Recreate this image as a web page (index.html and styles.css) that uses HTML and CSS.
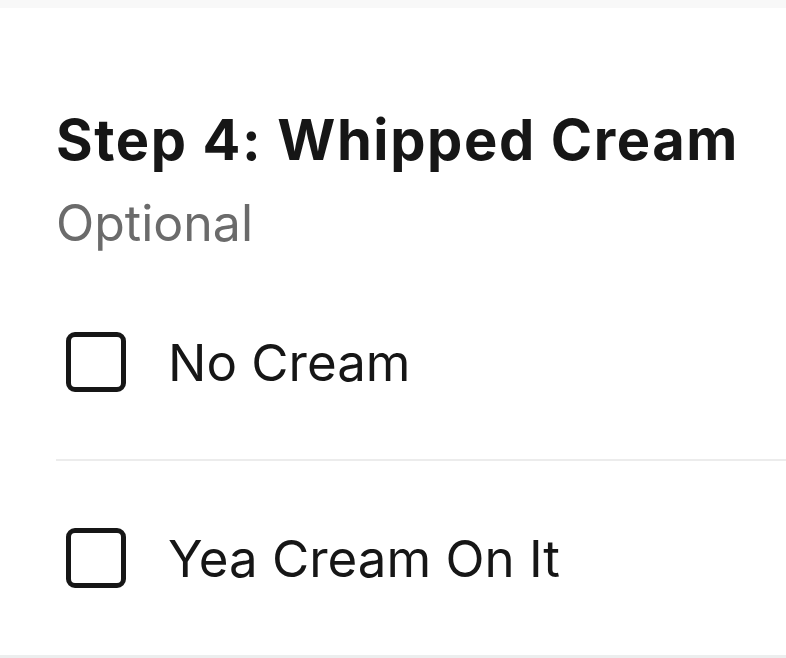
FILE: index.html
```html
<!DOCTYPE html>
<html lang="en">
<head>
  <meta charset="UTF-8">
  <meta name="viewport" content="width=device-width, initial-scale=1.0">
  <title>Step 4: Whipped Cream</title>
  <link rel="stylesheet" href="styles.css">
</head>
<body>
  <div class="top-band"></div>

  <section class="step">
    <h2 class="step-title">Step 4: Whipped Cream</h2>
    <p class="step-note">Optional</p>

    <ul class="options">
      <li class="option">
        <span class="checkbox"></span>
        <span class="option-label">No Cream</span>
      </li>
      <li class="option">
        <span class="checkbox"></span>
        <span class="option-label">Yea Cream On It</span>
      </li>
    </ul>
  </section>

  <div class="bottom-line"></div>
</body>
</html>
```

FILE: styles.css
```css
body {
  margin: 0;
  background-color: #ffffff;
  color: #161616;
  font-family: Inter, "Noto Sans", sans-serif;
  height: 658px;
  overflow: hidden;
}
.top-band {
  height: 8px;
  background-color: #f8f8f8;
}
.step {
  padding-left: 56px;
}
.step-title {
  font-size: 56px;
  font-weight: 700;
  letter-spacing: 1.6px;
  line-height: 1.2;
  margin: 99px 0 0;
}
.step-note {
  font-size: 50px;
  color: #6b6b6b;
  line-height: 1.2;
  margin: 19px 0 0;
}
.options {
  list-style: none;
  margin: 12px 0 0;
  padding: 0;
}
.option {
  display: flex;
  align-items: center;
  gap: 42px;
  height: 194px;
  padding-left: 10px;
}
.option + .option {
  border-top: 2px solid #ececec;
}
.checkbox {
  width: 60px;
  height: 60px;
  box-sizing: border-box;
  border: 5px solid #161616;
  border-radius: 9px;
}
.option-label {
  font-size: 51px;
}
.bottom-line {
  height: 3px;
  background-color: #eceeee;
}
```
